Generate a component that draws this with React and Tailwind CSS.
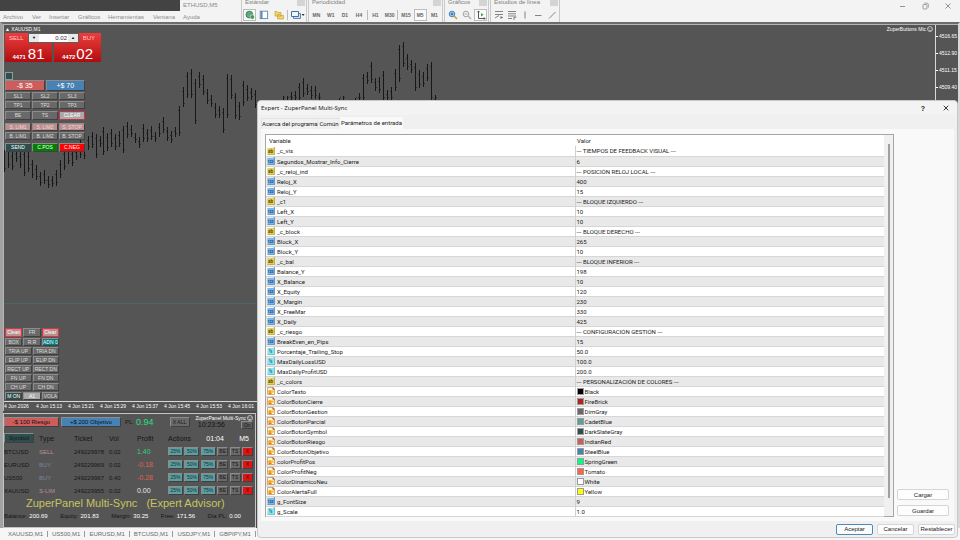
import React from "react";

const BARS = [
  [4, 150, 172], [8, 146, 168], [12, 152, 170], [16, 150, 162], [20, 152, 168], [24, 150, 176], [28, 152, 172], [32, 160, 178],
  [36, 165, 180], [40, 172, 186], [44, 170, 184], [48, 176, 188], [52, 176, 187], [56, 170, 186], [60, 160, 178], [64, 150, 170],
  [68, 146, 164], [72, 150, 166], [76, 148, 160], [80, 140, 158], [84, 146, 159], [88, 136, 150], [92, 132, 148], [96, 134, 158],
  [100, 136, 147], [103, 127, 155], [107, 133, 151], [111, 129, 147], [115, 134, 150], [119, 131, 147], [123, 126, 153],
  [127, 122, 138], [131, 125, 137], [135, 133, 143], [139, 137, 148], [143, 124, 142], [147, 129, 142], [151, 126, 140],
  [155, 132, 142], [159, 123, 137], [163, 117, 133], [167, 127, 141], [171, 131, 143], [175, 127, 137], [179, 106, 136],
  [183, 87, 107], [187, 72, 98], [191, 69, 98], [195, 79, 124], [199, 72, 88], [203, 75, 95], [207, 89, 104], [211, 95, 107],
  [215, 103, 118], [219, 106, 118], [223, 108, 133], [227, 74, 118], [231, 75, 99], [235, 93, 119], [239, 102, 120],
  [243, 81, 106], [247, 85, 101], [251, 88, 100], [255, 90, 108], [283, 96, 101], [287, 96, 101], [291, 92, 101],
  [295, 91, 101], [299, 83, 101], [303, 78, 97], [307, 84, 95], [311, 86, 99], [315, 86, 99], [319, 93, 101],
  [339, 98, 101], [343, 96, 101], [355, 98, 101], [359, 93, 101], [363, 74, 101], [367, 72, 84], [371, 62, 83],
  [375, 78, 91], [379, 77, 93], [383, 71, 101], [387, 90, 101], [391, 87, 101], [395, 69, 91], [399, 45, 82],
  [403, 42, 67], [407, 54, 70], [411, 60, 73], [415, 63, 91], [419, 70, 88], [423, 72, 87], [427, 64, 81], [431, 62, 101],
  [435, 95, 101],
];

const PARAMS = [
  ["s", "_c_vis", "--- TIEMPOS DE FEEDBACK VISUAL ---"],
  ["i", "Segundos_Mostrar_Info_Cierre", "6"],
  ["s", "_c_reloj_ind", "--- POSICIÓN RELOJ LOCAL ---"],
  ["i", "Reloj_X", "400"],
  ["i", "Reloj_Y", "15"],
  ["s", "_c1", "--- BLOQUE IZQUIERDO ---"],
  ["i", "Left_X", "10"],
  ["i", "Left_Y", "10"],
  ["s", "_c_block", "--- BLOQUE DERECHO ---"],
  ["i", "Block_X", "265"],
  ["i", "Block_Y", "10"],
  ["s", "_c_bal", "--- BLOQUE INFERIOR ---"],
  ["i", "Balance_Y", "198"],
  ["i", "X_Balance", "10"],
  ["i", "X_Equity", "120"],
  ["i", "X_Margin", "230"],
  ["i", "X_FreeMar", "330"],
  ["i", "X_Daily", "425"],
  ["s", "_c_riesgo", "--- CONFIGURACIÓN GESTIÓN ---"],
  ["i", "BreakEven_en_Pips", "15"],
  ["d", "Porcentaje_Trailing_Stop", "50.0"],
  ["d", "MaxDailyLossUSD", "100.0"],
  ["d", "MaxDailyProfitUSD", "200.0"],
  ["s", "_c_colors", "--- PERSONALIZACIÓN DE COLORES ---"],
  ["c", "ColorTexto", "Black", "bg-[#000000]"],
  ["c", "ColorBotonCierre", "FireBrick", "bg-[#b22222]"],
  ["c", "ColorBotonGestion", "DimGray", "bg-[#696969]"],
  ["c", "ColorBotonParcial", "CadetBlue", "bg-[#5f9ea0]"],
  ["c", "ColorBotonSymbol", "DarkSlateGray", "bg-[#2f4f4f]"],
  ["c", "ColorBotonRiesgo", "IndianRed", "bg-[#cd5c5c]"],
  ["c", "ColorBotonObjetivo", "SteelBlue", "bg-[#4682b4]"],
  ["c", "colorProfitPos", "SpringGreen", "bg-[#00ff7f]"],
  ["c", "ColorProfitNeg", "Tomato", "bg-[#ff6347]"],
  ["c", "ColorDinamicoNeu", "White", "bg-[#ffffff]"],
  ["c", "ColorAlertaFull", "Yellow", "bg-[#ffff00]"],
  ["i", "g_FontSize", "9"],
  ["d", "g_Scale", "1.0"],
];

const TRADES = [
  ["BTCUSD", "SELL", "249229978", "0.02", "1.40", "text-[#2fd07c]", "text-[#b98f8f]"],
  ["EURUSD", "BUY", "249229969", "0.02", "-0.18", "text-[#e0604c]", "text-[#7585a0]"],
  ["US500", "BUY", "249229967", "0.40", "-0.28", "text-[#e0604c]", "text-[#7585a0]"],
  ["XAUUSD", "S-LIM", "249229955", "0.02", "0.00", "text-[#e8e8e8]", "text-[#b98f8f]"],
];

const TYPE_ICON = {
  s: ["#e2d05c", "#b09a28", "ab", "#5c4c00"],
  i: ["#7db7ea", "#3f7fbd", "123", "#0c3c78"],
  d: ["#8fe3ea", "#3eb0bd", "½", "#0b6a78"],
};

function TypeIcon({ kind }) {
  if (kind === "c") {
    return (
      <svg className="size-2 shrink-0" viewBox="0 0 8 8" aria-hidden="true">
        <path d="M.5.5h5.3L7.5 2.2v5.3h-7z" fill="#fff6dd" stroke="#b98a4a" strokeWidth=".7" />
        <path d="M5.8.3v2h2" fill="#c84a2c" stroke="#8c4a3c" strokeWidth=".5" />
        <circle cx="2.9" cy="4.8" r="1.8" fill="#f2a51c" />
        <rect x="4" y="3.4" width="2.8" height="2.3" fill="#f7c22b" />
        <path d="M1.6 6h3v1h-3z" fill="#e4702c" />
      </svg>
    );
  }
  const [fill, edge, label, ink] = TYPE_ICON[kind];
  return (
    <svg className="size-2 shrink-0" viewBox="0 0 8 8" aria-hidden="true">
      <path d="M.4 1h7.2v6.6H.4z" fill={fill} />
      <path d="M6.6.2h1v7.4H.4" fill="none" stroke={edge} strokeWidth=".7" />
      <text x="3.6" y="6" textAnchor="middle" fontSize={label === "123" ? 3.6 : 4.6} fontWeight="700" fill={ink}>
        {label}
      </text>
    </svg>
  );
}

function ToolGroup({ title, className, children }) {
  return (
    <section className={`flex shrink-0 flex-col justify-between border-r border-[#c9c9c9] bg-[#f3f3f3] ${className}`}>
      <div className="flex h-[7px] items-start justify-between pl-[3px] pr-px">
        <h2 className="-mt-px text-[6px] leading-[6px] whitespace-nowrap text-[#808080]">{title}</h2>
        <span className="h-[6px] w-2 shrink-0 bg-[#d4d4d4]" />
      </div>
      <div className="flex h-[14px] items-center justify-between px-px">{children}</div>
    </section>
  );
}

function Tool({ label, active, wide, children }) {
  return (
    <button
      aria-label={label}
      className={`flex h-3 items-center justify-center text-[5px] leading-none font-bold text-[#666666] ${wide ? "w-4" : "w-[13px]"} ${
        active ? "border border-[#bcbcbc] bg-[#fafafa]" : ""
      }`}
    >
      {children}
    </button>
  );
}

function Glyph({ children }) {
  return (
    <svg className="size-[10px]" viewBox="0 0 10 10" fill="none" stroke="#777" strokeWidth=".9" aria-hidden="true">
      {children}
    </svg>
  );
}

function Header() {
  return (
    <header className="flex h-[22px] shrink-0 overflow-hidden bg-[#f3f3f3]">
      <div className="flex w-[241px] shrink-0 flex-col">
        <div className="flex h-[11px]">
          <div className="w-[180px] bg-[#444344]" />
          <h1 className="pl-[3px] text-[6px] leading-[11px] text-[#8a8a8a]">ETHUSD,M5</h1>
        </div>
        <nav className="flex h-[11px] items-center text-[6px] leading-none text-[#8c8c8c]">
          <button className="w-[29px] pl-[3px] text-left">Archivo</button>
          <button className="w-[17px] pl-[3px] text-left">Ver</button>
          <button className="w-[29px] pl-[3px] text-left">Insertar</button>
          <button className="w-[30px] pl-[3px] text-left">Gráficos</button>
          <button className="w-[45px] pl-[3px] text-left">Herramientas</button>
          <button className="w-[30px] pl-[3px] text-left">Ventana</button>
          <button className="w-[30px] pl-[3px] text-left">Ayuda</button>
        </nav>
      </div>
      <div className="flex gap-px">
        <ToolGroup title="Estándar" className="w-[66px] border-l">
          <Tool label="Datos de mercado" active>
            <Glyph>
              <circle cx="4.4" cy="4.6" r="3.4" fill="#5b9ed0" stroke="#3d7d3a" />
              <path d="M2 5.2c2-2.4 4-.4 5-2.4" stroke="#5cb531" strokeWidth="1.6" />
              <circle cx="7.3" cy="7" r="2.2" fill="#40a040" stroke="#fff" strokeWidth=".5" />
            </Glyph>
          </Tool>
          <Tool label="Ventana de datos">
            <Glyph>
              <rect x="1.2" y="1.2" width="7.4" height="7.4" fill="#fff" stroke="#5b87b5" />
              <path d="M2.6 1.2v7.4" stroke="#5b87b5" strokeWidth="1.8" />
            </Glyph>
          </Tool>
          <Tool label="Navegador">
            <Glyph>
              <path d="M1 1.5h2l1 1h3v3.6H1zM3.6 4.6h2l1 1h3v3.4h-6z" fill="#f6d75e" stroke="#b2953b" strokeWidth=".6" />
            </Glyph>
          </Tool>
          <span className="h-[10px] w-px bg-[#bbbbbb]" />
          <Tool label="Perfiles" wide>
            <svg className="h-[10px] w-[15px]" viewBox="0 0 15 10" aria-hidden="true">
              <path d="M3.5 3.5h7v5h-7z" fill="#cfe0f3" stroke="#5b87b5" />
              <path d="M1.5 1.5h7v5h-7z" fill="#eef5fc" stroke="#466f9d" />
              <path d="M11.6 4h3l-1.5 2z" fill="#333" />
            </svg>
          </Tool>
        </ToolGroup>
        <ToolGroup title="Periodicidad" className="w-[135px] border-l">
          {["MN", "W1", "D1", "H4"].map((t) => (
            <Tool key={t} label={t}>{t}</Tool>
          ))}
          <span className="h-[10px] w-px bg-[#bbbbbb]" />
          <Tool label="H1">H1</Tool>
          <Tool label="M30">M30</Tool>
          <span className="h-[10px] w-px bg-[#bbbbbb]" />
          <Tool label="M15">M15</Tool>
          <Tool label="M5" active>M5</Tool>
          <Tool label="M1">M1</Tool>
        </ToolGroup>
        <ToolGroup title="Gráficos" className="w-[45px] border-l">
          <Tool label="Acercar">
            <Glyph>
              <circle cx="4" cy="4" r="2.8" fill="#a9d3f2" stroke="#3a79b5" />
              <path d="M2.6 4h2.8M4 2.6v2.8" stroke="#245a8c" />
              <path d="M6.2 6.2 9 9" stroke="#c9a24d" strokeWidth="1.7" />
            </Glyph>
          </Tool>
          <Tool label="Alejar">
            <Glyph>
              <circle cx="4" cy="4" r="2.8" stroke="#9b9b9b" />
              <path d="M2.6 4h2.8" stroke="#9b9b9b" />
              <path d="M6.2 6.2 9 9" stroke="#b9b9b9" strokeWidth="1.7" />
            </Glyph>
          </Tool>
          <Tool label="Desplazamiento" active>
            <Glyph>
              <path d="M2.5 1v7.5H9M1.4 2.2 2.5 1l1.1 1.2M8 7.4l1.1 1.1L8 9.6" stroke="#444" />
              <path d="M5 3v3.6l2.6-1.8z" fill="#42a042" stroke="none" />
            </Glyph>
          </Tool>
        </ToolGroup>
        <ToolGroup title="Estudios de línea" className="w-[70px] border-l">
          <Tool label="Canal">
            <Glyph><path d="M1 1.5h8M1 4.5h8M1 8l4-2.500M6.500 7.500h2.500M7 6v3" /></Glyph>
          </Tool>
          <Tool label="Fibonacci">
            <Glyph><path d="M1 1.5h8M1 3.800h8M1 6h8M1 8.500h4M7 7v3M7 7.300h2.300" /></Glyph>
          </Tool>
          <Tool label="Línea vertical">
            <Glyph><path d="M5 1.500v7" /></Glyph>
          </Tool>
          <Tool label="Línea horizontal">
            <Glyph><path d="M2 5.500h6.500" /></Glyph>
          </Tool>
          <Tool label="Línea de tendencia">
            <Glyph><path d="M2 8.500 8.500 2" /></Glyph>
          </Tool>
        </ToolGroup>
      </div>
      <div className="ml-auto flex h-[11px] items-center gap-[13px] pr-[7px]">
        <button aria-label="Minimizar">
          <Glyph><path d="M3 5.500h5" stroke="#888" /></Glyph>
        </button>
        <button aria-label="Restaurar">
          <Glyph>
            <rect x="3" y="3.500" width="4" height="4.500" rx=".8" stroke="#888" strokeWidth=".8" />
            <path d="M4.200 2.200h3c.8 0 1.200.4 1.200 1.200V6.600" stroke="#888" strokeWidth=".7" />
          </Glyph>
        </button>
        <button aria-label="Cerrar">
          <Glyph><path d="m2.500 2.500 5 5m0-5-5 5" stroke="#888" /></Glyph>
        </button>
      </div>
    </header>
  );
}

const KEY = "flex items-center justify-center border border-t-[#8c8c8c] border-l-[#8c8c8c] border-r-[#404040] border-b-[#404040] leading-none whitespace-nowrap";
const GRAY = "bg-[#696969] text-[#dcdcdc]";

function Key({ className = "", children }) {
  return <button className={`${KEY} ${className}`}>{children}</button>;
}

function QuickTrade() {
  return (
    <div className="relative flex h-[29px] w-24 gap-[2px]">
      <button className="flex flex-1 flex-col justify-between bg-gradient-to-b from-[#ee3b3b] to-[#b00a0e] text-left text-white">
        <span className="pl-1 text-[6px] leading-[10px] text-[#ffc9c9]">SELL</span>
        <span className="flex items-end justify-center gap-[2px] self-center leading-none">
          <b className="pb-[2px] text-[6px]">4471</b>
          <span className="text-[15px] leading-4">81</span>
        </span>
      </button>
      <button className="flex flex-1 flex-col justify-between bg-gradient-to-b from-[#ee3b3b] to-[#b00a0e] text-white">
        <span className="self-end pr-[6px] text-[6px] leading-[10px] text-[#ffc9c9]">BUY</span>
        <span className="flex items-end justify-center gap-px self-center leading-none">
          <b className="pb-[2px] text-[6px]">4472</b>
          <span className="text-[15px] leading-4">02</span>
        </span>
      </button>
      <div className="absolute top-0 left-[23px] flex h-[10px] w-[51px] items-center border border-[#5d5d5d] bg-[#e9e9e9] text-[4px] text-black">
        <button aria-label="Menos" className="w-[10px]">▼</button>
        <input
          aria-label="Volumen"
          defaultValue="0.02"
          className="h-full min-w-0 flex-1 bg-white pr-px text-right text-[6px] leading-none text-[#333333]"
        />
        <button aria-label="Más" className="w-[10px]">▲</button>
      </div>
    </div>
  );
}

function OrderKeys() {
  const pink = "bg-[#bc8f8f] text-[#efdada]";
  return (
    <div className="w-20 text-[5px]">
      <div className="grid grid-cols-2 gap-px text-[7px]">
        <Key className="h-[11px] bg-[#cd5c5c] text-white">-$ 35</Key>
        <Key className="h-[11px] bg-[#4682b4] text-white">+$ 70</Key>
      </div>
      <div className="mt-px grid grid-cols-3 gap-px">
        {["SL1", "SL2", "SL3", "TP1", "TP2", "TP3"].map((t) => (
          <Key key={t} className={`h-2 ${GRAY}`}>{t}</Key>
        ))}
      </div>
      <div className="mt-[2px] grid grid-cols-3 gap-px">
        <Key className={`h-[9px] ${GRAY}`}>BE</Key>
        <Key className={`h-[9px] ${GRAY}`}>TS</Key>
        <button className="h-[9px] border border-[#c83246] bg-[#a9a9a9] leading-none text-white">CLEAR</button>
      </div>
      <div className="mt-[3px] grid grid-cols-3 gap-px">
        {["S. LIM1", "S. LIM2", "S. STOP"].map((t) => (
          <Key key={t} className={`h-2 ${pink}`}>{t}</Key>
        ))}
        {["B. LIM1", "B. LIM2", "B. STOP"].map((t) => (
          <Key key={t} className={`h-2 ${GRAY}`}>{t}</Key>
        ))}
      </div>
      <div className="mt-[3px] grid grid-cols-3 gap-px text-white">
        <Key className="h-[9px] bg-[#2f4f4f]">SEND</Key>
        <Key className="h-[9px] bg-[#008000]">C.POS</Key>
        <Key className="h-[9px] bg-[#ff0000]">C.NEG</Key>
      </div>
    </div>
  );
}

function DrawKeys() {
  const clean = "h-[9px] border border-[#dc3246] bg-[#bc8f8f] leading-none text-white";
  return (
    <div className="w-[54px] text-[5px]">
      <div className="grid grid-cols-3 gap-px">
        <button className={clean}>Clean</button>
        <Key className={`h-[9px] ${GRAY}`}>FR</Key>
        <button className={clean}>Clear</button>
        <Key className={`h-2 ${GRAY}`}>BOX</Key>
        <Key className={`h-2 ${GRAY}`}>R:R</Key>
        <Key className="h-2 bg-[#008080] text-white">ADN 0</Key>
      </div>
      <div className="mt-px grid grid-cols-2 gap-px">
        {["TRIA UP", "TRIA DN", "ELIP UP", "ELIP DN", "RECT UP", "RECT DN", "FN UP", "FN DN", "CH UP", "CH DN"].map((t) => (
          <Key key={t} className={`h-2 ${GRAY}`}>{t}</Key>
        ))}
      </div>
      <div className="mt-px grid grid-cols-3 gap-px">
        <Key className="h-2 bg-[#2f4f4f] text-white">M ON</Key>
        <Key className="h-2 bg-[#a9a9a9] text-white">A1</Key>
        <Key className={`h-2 ${GRAY}`}>VOLA</Key>
      </div>
    </div>
  );
}

function Gauge() {
  return (
    <svg className="size-[6px] shrink-0" viewBox="0 0 6 6" fill="none" stroke="#fff" strokeWidth=".6" aria-hidden="true">
      <circle cx="3" cy="3" r="2.500" />
      <path d="M2 2v.7M4 2v.7M1.800 4c.8.600 1.600.600 2.400 0" />
    </svg>
  );
}

function MainChart() {
  const dates = ["4 Jun 2026", "4 Jun 15:13", "4 Jun 15:21", "4 Jun 15:29", "4 Jun 15:37", "4 Jun 15:45", "4 Jun 15:53", "4 Jun 16:01"];
  return (
    <section className="flex h-[387px] shrink-0 border-t border-l border-[#b5b5b5] bg-[#555555] text-white">
      <div className="flex min-w-0 flex-1 flex-col">
        <div className="relative flex flex-1 flex-col border-r border-b border-[#d8d8d8] pl-px">
          <svg className="absolute top-0 left-0 h-full w-[450px]" viewBox="4 25 450 376" preserveAspectRatio="xMinYMin slice" aria-hidden="true">
            {BARS.map(([x, hi, lo]) => (
              <g key={x} stroke="#181818" fill="none">
                <path d={`M${x + 0.5} ${hi}V${lo}`} />
                <path d={`M${x - 1} ${hi + 4.5}h1M${x + 1} ${lo - 3.5}h1`} strokeOpacity=".6" />
              </g>
            ))}
            <path d="M4 303.500h254" stroke="#48686a" strokeWidth="1" />
          </svg>
          <div className="relative flex h-2 items-center justify-between pr-[2px]">
            <span className="text-[5px] leading-none">▲ XAUUSD,M1</span>
            <span className="flex items-center gap-px text-[5px] leading-none">ZuperButtons Mic <Gauge /></span>
          </div>
          <QuickTrade />
          <button aria-label="Mostrar panel" className="relative mt-[10px] size-2 border border-[#8c9c9c] bg-[#2f4f4f]" />
          <div className="relative">
            <OrderKeys />
          </div>
          <div className="relative mt-auto pb-px">
            <DrawKeys />
          </div>
        </div>
        <div className="flex h-[9px] items-center overflow-hidden text-[5px] leading-none">
          {dates.map((d) => (
            <span key={d} className="w-8 shrink-0 whitespace-nowrap">{d}</span>
          ))}
        </div>
      </div>
      <ol className="flex w-[22px] flex-col gap-[11px] pt-2 text-[5px] leading-[6px]">
        {["4516.65", "4512.90", "4511.15", "4509.40"].map((p) => (
          <li key={p} className="flex items-center gap-px">
            <span className="h-px w-[2px] bg-white" />
            {p}
          </li>
        ))}
      </ol>
    </section>
  );
}

function PanelChart() {
  const pct = "h-[9px] w-[15px] bg-[#5f9ea0] text-[#123036]";
  const small = "h-[9px] w-[11px] bg-[#696969] text-[#161616]";
  return (
    <section className="flex w-[253px] shrink-0 flex-col border border-[#c4c4c4] bg-[#555555] pr-[2px] text-[#161616]">
      <div className="flex h-[15px] items-center pt-px">
        <Key className="h-[10px] w-[55px] bg-[#cd5c5c] text-[6px] text-[#1c0d0d]">-$ 100 Riesgo</Key>
        <Key className="ml-[2px] h-[10px] w-[60px] bg-[#4682b4] text-[6px] text-[#0d141c]">+$ 200 Objetivo</Key>
        <span className="ml-1 text-[6px]">PL:</span>
        <span className="ml-[2px] text-[9px] leading-none text-[#20e080]">0.94</span>
        <Key className="ml-4 h-[10px] w-5 bg-[#696969] text-[5px]">X ALL</Key>
        <div className="ml-auto flex flex-col items-end">
          <span className="flex items-center gap-px text-[5px] leading-[6px] whitespace-nowrap text-white">ZuperPanel Multi-Sync <Gauge /></span>
          <div className="flex items-center gap-4">
            <time className="text-[7px] leading-[8px]">10:23:56</time>
            <Key className="h-2 w-3 bg-[#5c5c5c] text-[5px]">On</Key>
          </div>
        </div>
      </div>
      <table className="mt-[2px] w-full table-fixed border-collapse text-left text-[7px] leading-none">
        <colgroup>
          <col className="w-[35px]" />
          <col className="w-[35px]" />
          <col className="w-[35px]" />
          <col className="w-[28px]" />
          <col className="w-[31px]" />
          <col />
        </colgroup>
        <thead>
          <tr className="h-[14px] [&>th]:font-normal">
            <th><Key className="h-[10px] w-[30px] bg-[#2f4f4f] text-[6px]">Symbol</Key></th>
            <th>Type</th>
            <th>Ticket</th>
            <th>Vol</th>
            <th>Profit</th>
            <th>
              <div className="flex items-center justify-between pr-1">
                <span>Actions</span>
                <span className="text-white">01:04</span>
                <span className="text-white">M5</span>
              </div>
            </th>
          </tr>
        </thead>
        <tbody>
          {TRADES.map(([sym, type, ticket, vol, profit, tone, typeTone]) => (
            <tr key={ticket} className="h-[13px]">
              <td className="text-[6px]">{sym}</td>
              <td className={`text-[6px] ${typeTone}`}>{type}</td>
              <td className="text-[6px]">{ticket}</td>
              <td className="text-[6px]">{vol}</td>
              <td className={tone}>{profit}</td>
              <td>
                <div className="flex justify-between text-[5px]">
                  {["25%", "50%", "75%"].map((p) => (
                    <Key key={p} className={pct}>{p}</Key>
                  ))}
                  <Key className={small}>BE</Key>
                  <Key className={small}>TS</Key>
                  <Key className="h-[9px] w-[11px] bg-[#e01414] text-[#500000]">X</Key>
                </div>
              </td>
            </tr>
          ))}
        </tbody>
      </table>
      <p className="pl-[22px] text-[11px] leading-[13px] whitespace-pre text-[#c9c45e]">ZuperPanel Multi-Sync   (Expert Advisor)</p>
      <dl className="flex justify-between pr-3 text-[6px] leading-[12px] [&_dd]:text-white">
        {[["Balance:", "200.69"], ["Equity:", "201.83"], ["Margin:", "30.25"], ["Free:", "171.56"], ["Dia PL:", "0.00"]].map(([k, v]) => (
          <div key={k} className="flex gap-[2px]">
            <dt>{k}</dt>
            <dd>{v}</dd>
          </div>
        ))}
      </dl>
    </section>
  );
}

function ExpertDialog() {
  const btn = "flex items-center justify-center rounded-[2px] border bg-[#fdfdfd] text-[6px] leading-none text-[#1a1a1a]";
  return (
    <div
      role="dialog"
      aria-labelledby="expert-title"
      className="absolute top-[100px] right-[2px] bottom-[2px] left-[257px] flex flex-col rounded-[4px] border border-[#c8c8c8] bg-[#f0f0f0] text-[#1a1a1a]"
    >
      <div className="flex h-[14px] shrink-0 items-center rounded-t-[4px] bg-[#f3f3f3] pl-[3px] pr-[8px]">
        <h2 id="expert-title" className="font-['Noto_Sans'] text-[6px] leading-none">Expert - ZuperPanel Multi-Sync</h2>
        <div className="ml-auto flex items-center gap-[18px]">
          <button aria-label="Ayuda" className="text-[7px] leading-none font-bold">?</button>
          <button aria-label="Cerrar diálogo">
            <svg className="size-[6px]" viewBox="0 0 6 6" aria-hidden="true">
              <path d="m.7.7 4.600 4.600m0-4.600L.7 5.300" stroke="#222" strokeWidth=".9" />
            </svg>
          </button>
        </div>
      </div>
      <div role="tablist" className="flex h-[14px] shrink-0 items-end pl-[3px] font-['Roboto',sans-serif] text-[6px] leading-[10px]">
        <button role="tab" className="w-[57px] border border-b-0 border-[#e4e4e4] whitespace-nowrap">Acerca del programa</button>
        <button role="tab" className="w-[22px] border-t border-[#e4e4e4]">Común</button>
        <button role="tab" aria-selected="true" className="h-3 w-[63px] bg-[#f9f9f9] whitespace-nowrap">Parámetros de entrada</button>
      </div>
      <div className="mx-[3px] flex min-h-0 flex-1 gap-[3px] bg-[#f9f9f9] pt-[5px] pb-1 pl-1 pr-px">
        <div className="flex min-w-0 flex-1 border border-[#a5a5a5] bg-white">
          <table className="min-w-0 flex-1 table-fixed self-start border-collapse text-left font-['Roboto',sans-serif] text-[6px] leading-[9px]">
            <colgroup>
              <col className="w-1/2" />
              <col className="w-1/2" />
            </colgroup>
            <thead>
              <tr className="h-[11px] [&>th]:font-normal">
                <th className="pl-[3px]">Variable</th>
                <th className="pl-[2px]">Valor</th>
              </tr>
            </thead>
            <tbody>
              {PARAMS.map(([kind, name, value, swatch]) => (
                <tr key={name} className="h-[10px] border-b border-[#d6d6d6] even:bg-[#e9e9e9]">
                  <td className="border-r border-[#d0d0d0] p-0">
                    <div className="flex h-[9px] items-center gap-[2px] pl-px">
                      <TypeIcon kind={kind} />
                      <span>{name}</span>
                    </div>
                  </td>
                  <td className="p-0">
                    <div className="flex h-[9px] items-center gap-px pl-px">
                      {swatch && <span className={`size-[7px] border border-[#9a9a9a] ${swatch}`} />}
                      <span>{value}</span>
                    </div>
                  </td>
                </tr>
              ))}
            </tbody>
          </table>
          <div className="flex w-[9px] justify-center bg-[#f0f0f0] pt-[9px] pb-[18px]">
            <div className="w-[2px] bg-[#a0a0a0]" />
          </div>
        </div>
        <div className="flex w-[56px] flex-col justify-end gap-[5px] pr-[4px] pb-px">
          <button className={`${btn} h-[11px] border-[#d5d5d5]`}>Cargar</button>
          <button className={`${btn} h-[11px] border-[#d5d5d5]`}>Guardar</button>
        </div>
      </div>
      <div className="flex h-4 shrink-0 items-center justify-end gap-1 pr-[2px]">
        <button className={`${btn} h-[11px] w-[37px] border-[#4a88c2]`}>Aceptar</button>
        <button className={`${btn} h-[11px] w-[37px] border-[#d5d5d5]`}>Cancelar</button>
        <button className={`${btn} h-[11px] w-[37px] border-[#d5d5d5]`}>Restablecer</button>
      </div>
    </div>
  );
}

export default function App() {
  return (
    <main className="relative flex h-screen min-h-[540px] flex-col overflow-hidden bg-[#f0f0f0] font-['Liberation_Sans',Arial,sans-serif]">
      <Header />
      <div className="flex min-h-0 flex-1 flex-col border-t-2 border-r-[2px] border-l-[3px] border-t-[#6c6c6c] border-r-[#d8d8d8] border-l-[#a2a2a2] bg-[#4a4a4a]">
        <MainChart />
        <div className="mt-[2px] flex min-h-0 flex-1">
          <PanelChart />
        </div>
      </div>
      <nav className="flex h-3 shrink-0 items-center bg-[#f6f6f6] pl-1 text-[6px] leading-none text-[#6a6a6a]">
        {["XAUUSD,M1", "US500,M1", "EURUSD,M1", "BTCUSD,M1", "USDJPY,M1", "GBPIPY,M1"].map((t) => (
          <button key={t} className="border-r border-[#9a9a9a] px-1">{t}</button>
        ))}
      </nav>
      <ExpertDialog />
    </main>
  );
}
